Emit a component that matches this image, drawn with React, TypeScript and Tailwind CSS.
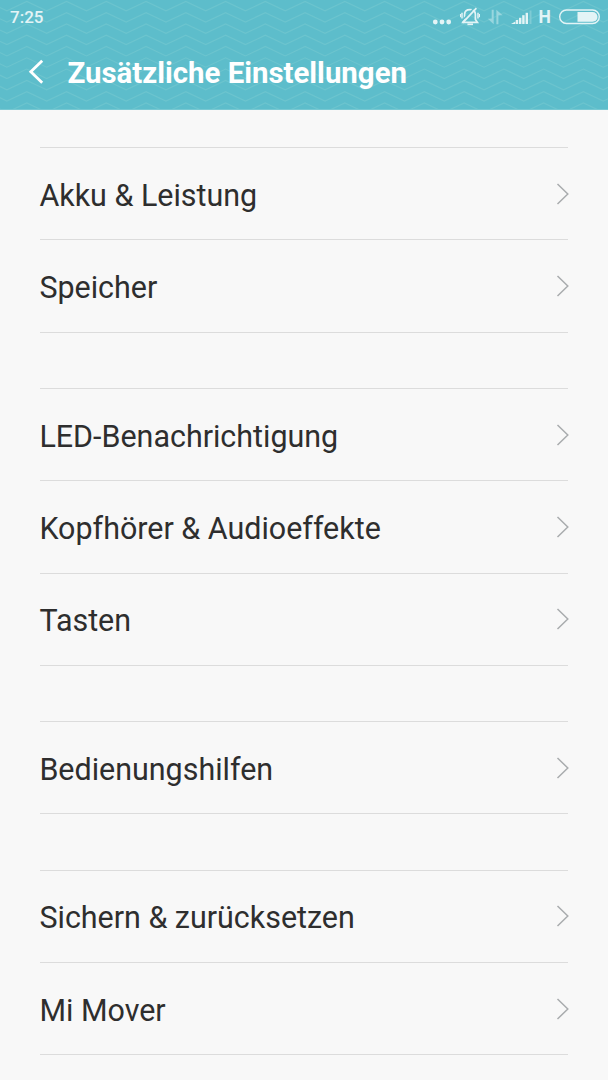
import React from 'react';

const sections = [
    ['Akku & Leistung', 'Speicher'],
    ['LED-Benachrichtigung', 'Kopfhörer & Audioeffekte', 'Tasten'],
    ['Bedienungshilfen'],
    ['Sichern & zurücksetzen', 'Mi Mover'],
];

// one zigzag line across the header, reused for every row
const zigzag = Array.from({ length: 33 }, (_, i) => {
    const x = (-13 + i * 19.88).toFixed(2);
    return `${i === 0 ? 'M' : 'L'}${x} ${i % 2 === 0 ? 0 : 9.4}`;
}).join('');

const Waves: React.FC = () => (
    <svg className="absolute inset-0 w-full h-full" fill="none" stroke="#6cc4ce" strokeWidth="1.2" aria-hidden="true">
        {Array.from({ length: 11 }, (_, i) => (
            <path key={i} d={zigzag} transform={`translate(0 ${1.4 + (i - 1) * 11.28})`} />
        ))}
    </svg>
);

const StatusIcons: React.FC = () => (
    <svg width="176" height="34" viewBox="432 0 176 34" fill="none" aria-hidden="true">
        <g fill="#e3f4f6">
            <circle cx="435.3" cy="22" r="2.4" />
            <circle cx="442" cy="22" r="2.4" />
            <circle cx="448.7" cy="22" r="2.4" />
        </g>
        {/* muted bell */}
        <g stroke="#e3f4f6" strokeWidth="1.7">
            <path d="M464.6 19.5V14.5C464.6 11.4 466.8 9.6 470 9.6C473.4 9.6 475.4 11.6 475.4 14.5V19.5L477.4 22.3H462.8Z" />
            <path d="M467.4 24.3H473" />
            <path d="M462 12.8V18.4M478 12.8V18.4" strokeWidth="1.5" />
            <path d="M460.5 14V17.2M479.5 14V17.2" strokeWidth="1" />
            <path d="M474.6 7.4L462 20.8" stroke="#5dbdcb" strokeWidth="1.4" />
            <path d="M476.4 8.2L462.6 22.9" strokeWidth="1.7" />
        </g>
        <g fill="#98d6de">
            <path d="M491.7 9.8H493.7V24.2L487.8 18.8H491.7Z" />
            <path d="M496.4 24.2V9.8L502.6 15.2H498.4V24.2Z" />
        </g>
        <g fill="#e3f4f6">
            <path d="M511 24L515.4 21.6V24Z" />
            <rect x="515.8" y="20" width="2.4" height="4" />
            <rect x="519" y="17.8" width="2.4" height="6.2" />
            <rect x="522.2" y="15.2" width="2.4" height="8.8" />
            <rect x="525.6" y="12.8" width="2.4" height="11.2" />
            <rect x="529.6" y="10.5" width="1.9" height="13.5" fill="#7fcbd5" />
        </g>
        <rect x="559.7" y="10" width="39.6" height="13.5" rx="6.75" stroke="#e3f4f6" strokeWidth="1.4" />
        <path d="M577.5 12H592.6A4.8 4.8 0 0 1 592.6 21.8H577.5Z" fill="#e3f4f6" />
    </svg>
);

const Header: React.FC = () => (
    <header className="relative h-[110px] overflow-hidden bg-[#5dbdcb] border-b border-[#78c8d2]">
        <Waves />
        <div className="relative flex h-[34px] justify-between">
            <span className="pl-[10px] text-[17px] leading-[34px] font-medium text-[#e3f4f6]">7:25</span>
            <div className="relative flex">
                <StatusIcons />
                <span className="absolute left-[106.4px] top-0 text-[17.5px] leading-[34px] font-bold text-[#e3f4f6]">H</span>
            </div>
        </div>
        <div className="relative flex h-[76px] items-center pl-[28px]">
            <svg width="16" height="26" viewBox="0 0 16 26" fill="none" stroke="#fff" strokeWidth="2.8" aria-hidden="true">
                <path d="M14.2 1.8L2.8 12.8L14.2 23.8" />
            </svg>
            <h1 className="pl-[23.4px] pt-[1px] text-[29.4px] leading-[40px] font-bold text-white whitespace-nowrap">
                Zusätzliche Einstellungen
            </h1>
        </div>
    </header>
);

const Row: React.FC<{ label: string }> = ({ label }) => (
    <li className="flex h-[92.28px] items-center justify-between border-b border-[#dcdcdc]">
        <span className="-ml-[0.6px] pt-[4px] text-[30.45px] leading-[40px] text-[#2e2e2e] whitespace-nowrap">{label}</span>
        <svg className="-mr-[1px]" width="13" height="22" viewBox="0 0 13 22" fill="none" stroke="#a9acae" strokeWidth="1.5" aria-hidden="true">
            <path d="M1.5 1L11.8 11L1.5 21" />
        </svg>
    </li>
);

export default function App() {
    return (
        <div className="h-[1080px] w-[608px] overflow-hidden bg-[#f8f8f8] font-['Roboto',sans-serif]">
            <Header />
            <main className="flex flex-col gap-[55.3px] px-[40px] pt-[37.15px]">
                {sections.map((items) => (
                    <ul key={items[0]} className="border-t border-[#dcdcdc]">
                        {items.map((label) => (
                            <Row key={label} label={label} />
                        ))}
                    </ul>
                ))}
            </main>
        </div>
    );
}
